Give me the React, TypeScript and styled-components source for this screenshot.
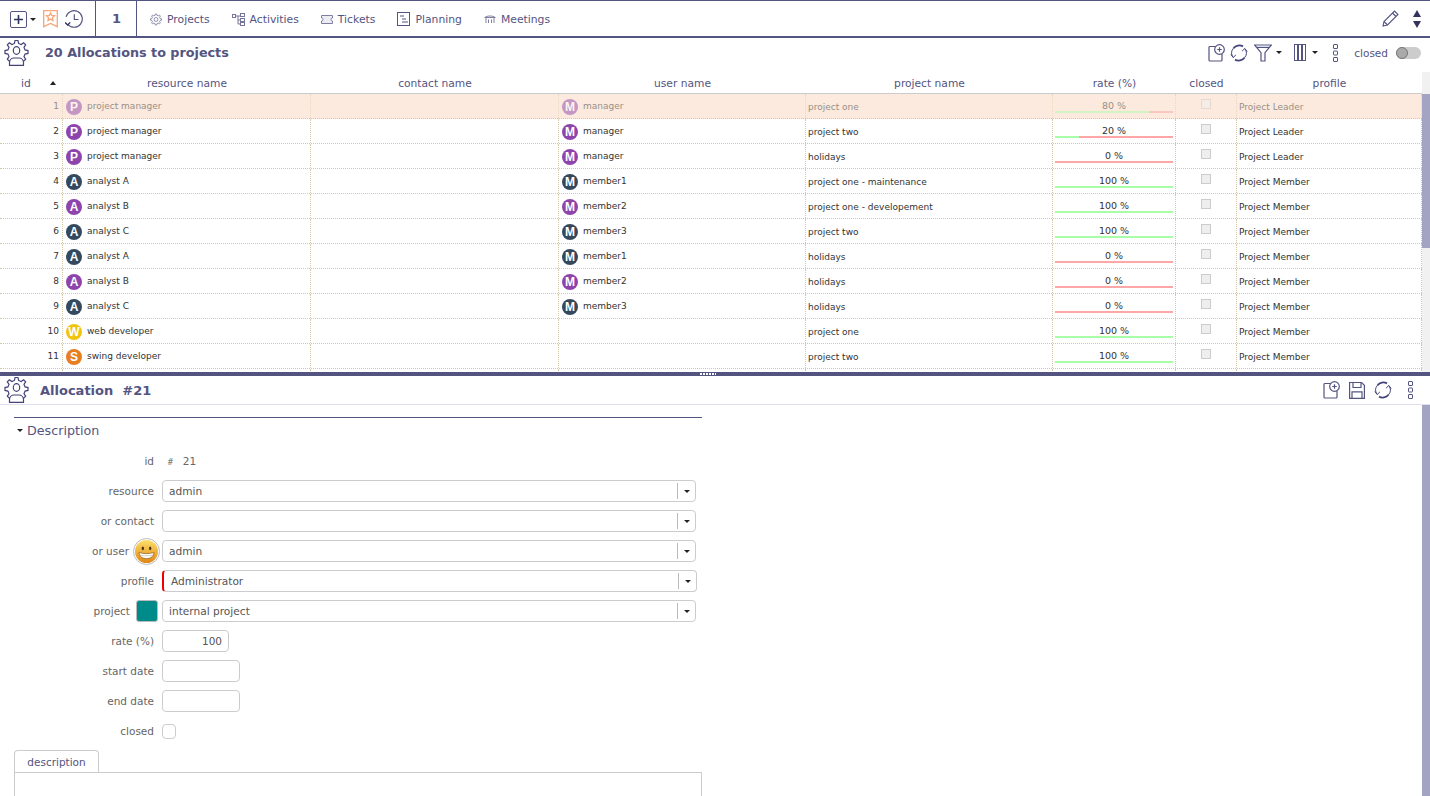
import styled, {createGlobalStyle} from 'styled-components';
import {ReactNode} from "react";

const NAVY = '#545481';
const GRID = '63px 248px 248px 247px 247px 123px 61px 1fr';
const DOT = '#d6c8a4';

type Allocation = {
    id: number,
    letter: string,
    tint: string,
    resource: string,
    user?: string,
    userTint?: string,
    userLetter?: string,
    project: string,
    rate: number,
    profile: string,
}

const PURPLE = '#8e44ad';
const DARK = '#34495e';

const rows: Allocation[] = [
    {id: 1, letter: 'P', tint: PURPLE, resource: 'project manager', user: 'manager', userLetter: 'M', userTint: PURPLE, project: 'project one', rate: 80, profile: 'Project Leader'},
    {id: 2, letter: 'P', tint: PURPLE, resource: 'project manager', user: 'manager', userLetter: 'M', userTint: PURPLE, project: 'project two', rate: 20, profile: 'Project Leader'},
    {id: 3, letter: 'P', tint: PURPLE, resource: 'project manager', user: 'manager', userLetter: 'M', userTint: PURPLE, project: 'holidays', rate: 0, profile: 'Project Leader'},
    {id: 4, letter: 'A', tint: DARK, resource: 'analyst A', user: 'member1', userLetter: 'M', userTint: DARK, project: 'project one - maintenance', rate: 100, profile: 'Project Member'},
    {id: 5, letter: 'A', tint: PURPLE, resource: 'analyst B', user: 'member2', userLetter: 'M', userTint: PURPLE, project: 'project one - developement', rate: 100, profile: 'Project Member'},
    {id: 6, letter: 'A', tint: DARK, resource: 'analyst C', user: 'member3', userLetter: 'M', userTint: DARK, project: 'project two', rate: 100, profile: 'Project Member'},
    {id: 7, letter: 'A', tint: DARK, resource: 'analyst A', user: 'member1', userLetter: 'M', userTint: DARK, project: 'holidays', rate: 0, profile: 'Project Member'},
    {id: 8, letter: 'A', tint: PURPLE, resource: 'analyst B', user: 'member2', userLetter: 'M', userTint: PURPLE, project: 'holidays', rate: 0, profile: 'Project Member'},
    {id: 9, letter: 'A', tint: DARK, resource: 'analyst C', user: 'member3', userLetter: 'M', userTint: DARK, project: 'holidays', rate: 0, profile: 'Project Member'},
    {id: 10, letter: 'W', tint: '#f1c40f', resource: 'web developer', project: 'project one', rate: 100, profile: 'Project Member'},
    {id: 11, letter: 'S', tint: '#e67e22', resource: 'swing developer', project: 'project two', rate: 100, profile: 'Project Member'},
];

const gearPath = (() => {
    const points: string[] = [];
    const teeth = 8;
    for (let i = 0; i < teeth; i++) {
        const a = (i / teeth) * Math.PI * 2;
        const step = Math.PI * 2 / teeth;
        [[a - step * 0.3, 8.8], [a - step * 0.16, 11.6], [a + step * 0.16, 11.6], [a + step * 0.3, 8.8]].forEach(([t, r]) => {
            points.push(`${(12.5 + Math.sin(t) * r).toFixed(2)} ${(12 - Math.cos(t) * r).toFixed(2)}`);
        });
    }
    return 'M' + points.join('L') + 'Z';
})();

function GearPerson() {
    return (
        <svg width="25" height="26" viewBox="0 0 25 26" fill="none" stroke="#43437a" strokeWidth="1.2">
            <path d={gearPath}/>
            <ellipse cx="12.500" cy="10.500" rx="3.200" ry="3.800" fill="#fff"/>
            <path d="M5.500 25.400v-2.900a4.500 4.500 0 0 1 4.500-4.500h5a4.500 4.500 0 0 1 4.500 4.500v2.900z" fill="#fff"/>
        </svg>
    );
}

function AddDoc() {
    return (
        <svg width="17" height="18" viewBox="0 0 17 18" fill="none" stroke={NAVY} strokeWidth="1.2">
            <path d="M9 2.500H2a1 1 0 0 0-1 1V16a1 1 0 0 0 1 1h11a1 1 0 0 0 1-1V10"/>
            <circle cx="11.500" cy="5.500" r="4.800" fill="#fff"/>
            <path d="M11.500 3.200v4.600M9.200 5.500h4.600"/>
        </svg>
    );
}

function Refresh() {
    return (
        <svg width="18" height="18" viewBox="0 0 18 18" fill="none" stroke="#43437a">
            <path d="M3.500 4.200A7.400 7.400 0 0 1 13 2.400" strokeWidth="1.800"/>
            <path d="M14.500 13.800A7.400 7.400 0 0 1 5 15.600" strokeWidth="1.800"/>
            <path d="M3.500 4.200A7.400 7.400 0 0 0 3.200 13.400" strokeWidth="1"/>
            <path d="M14.500 13.800A7.400 7.400 0 0 0 14.800 4.600" strokeWidth="1"/>
            <path d="M.8 10.500l2.400 3 2.700-2.600M17.200 7.500l-2.400-3-2.700 2.600" strokeWidth="1"/>
        </svg>
    );
}

function Funnel() {
    return (
        <svg width="18" height="18" viewBox="0 0 18 18" fill="none" stroke={NAVY} strokeWidth="1.200">
            <path d="M.6 1h16.800L11 8.600V17H7V8.600z"/>
            <path d="M3 3.400h12"/>
        </svg>
    );
}

function Columns() {
    return (
        <svg width="12" height="17" viewBox="0 0 12 17" fill="none" stroke={NAVY} strokeWidth="1">
            <rect x=".5" y=".5" width="3" height="16"/>
            <rect x="4.500" y=".5" width="3" height="16"/>
            <rect x="8.500" y=".5" width="3" height="16"/>
        </svg>
    );
}

function Dots() {
    return (
        <svg width="5" height="18" viewBox="0 0 5 18" fill="none" stroke={NAVY} strokeWidth="1">
            <rect x=".5" y=".5" width="4" height="4" rx=".5"/>
            <rect x=".5" y="7" width="4" height="4" rx=".5"/>
            <rect x=".5" y="13.500" width="4" height="4" rx=".5"/>
        </svg>
    );
}

function Save() {
    return (
        <svg width="16" height="18" viewBox="0 0 16 18" fill="none" stroke={NAVY} strokeWidth="1.200">
            <path d="M.6 1.500h12l2.800 2.800v13H.6z"/>
            <path d="M4 1.500v5h8v-5M3 17.300v-6.500h10v6.500"/>
        </svg>
    );
}

function AddSquare() {
    return (
        <svg width="17" height="17" viewBox="0 0 17 17" fill="none">
            <rect x=".5" y=".5" width="16" height="16" rx="1.500" stroke={NAVY}/>
            <path d="M8.500 4v9M4 8.500h9" stroke="#33335f" strokeWidth="1.600"/>
        </svg>
    );
}

function Bookmark() {
    return (
        <svg width="15" height="18" viewBox="0 0 15 18" fill="none" stroke="#f5a778" strokeWidth="1.300">
            <path d="M.7.7h13.600v16L7.500 13.500.7 16.700z"/>
            <path d="M7.500 2.900l1.200 2.600 2.800.3-2.100 1.900.6 2.800-2.500-1.400-2.500 1.400.6-2.800-2.100-1.900 2.800-.3z"/>
        </svg>
    );
}

function History() {
    return (
        <svg width="18" height="18" viewBox="0 0 17 17" fill="none" stroke={NAVY} strokeWidth="1.100">
            <path d="M2.600 13.500A7.800 7.800 0 1 0 1 6.500"/>
            <path d="M0 11.800l2.600 2.400 2.300-2.500" stroke="#33335f" strokeWidth="1.300"/>
            <path d="M8.800 4v5h4"/>
        </svg>
    );
}

function Pencil() {
    return (
        <svg width="17" height="17" viewBox="0 0 17 17" fill="none" stroke={NAVY} strokeWidth="1.100">
            <path d="M1 16l1-4.500L12.500 1l3.500 3.500L5.500 15z"/>
            <path d="M2 11.500L5.500 15M10.500 3l3.500 3.500"/>
        </svg>
    );
}

function ProjectsIcon() {
    return (
        <svg width="12" height="13" viewBox="0 0 25 26" fill="none" stroke={NAVY} strokeWidth="1.800" opacity=".75">
            <path d={gearPath} transform="translate(0 1)"/>
            <circle cx="12.500" cy="13" r="4"/>
        </svg>
    );
}

function ActivitiesIcon() {
    return (
        <svg width="13" height="13" viewBox="0 0 13 13" fill="none" stroke={NAVY} strokeWidth="1" opacity=".8">
            <rect x=".5" y="1.500" width="3" height="3"/>
            <rect x="8.500" y=".5" width="4" height="3"/>
            <rect x="8.500" y="5.500" width="4" height="3"/>
            <rect x="8.500" y="9.500" width="4" height="3"/>
            <path d="M3.500 3h5M6 3v8h2.500M6 7h2.500"/>
        </svg>
    );
}

function TicketIcon() {
    return (
        <svg width="12" height="9" viewBox="0 0 12 9" fill="#e6e6ef" stroke={NAVY} strokeWidth="1" opacity=".75">
            <path d="M.5.5h11v2.500a1.500 1.500 0 0 0 0 3v2.500H.5V6a1.500 1.500 0 0 0 0-3z"/>
        </svg>
    );
}

function PlanningIcon() {
    return (
        <svg width="13" height="14" viewBox="0 0 13 14" fill="none" stroke={NAVY} strokeWidth="1">
            <rect x=".5" y=".5" width="12" height="13"/>
            <path d="M3 4h4M5 7h4M5 10h6"/>
        </svg>
    );
}

function MeetingIcon() {
    return (
        <svg width="12" height="8" viewBox="0 0 12 8" fill="none" stroke={NAVY} strokeWidth="1" opacity=".75">
            <path d="M1 2.500C3 .5 9 .5 11 2.500M.5 2.500h11M2 2.500V8M10 2.500V8M4.500 4.500V8M7.500 4.500V8"/>
        </svg>
    );
}

function Smiley() {
    return (
        <svg width="23" height="23" viewBox="0 0 22 22">
            <defs>
                <linearGradient id="face" x1="0" y1="0" x2="0" y2="1">
                    <stop offset="0" stopColor="#fde06a"/>
                    <stop offset="1" stopColor="#e08512"/>
                </linearGradient>
            </defs>
            <circle cx="11" cy="11" r="11" fill="url(#face)"/>
            <ellipse cx="7.500" cy="8" rx="1.100" ry="1.800" fill="#4a3410"/>
            <ellipse cx="14.500" cy="8" rx="1.100" ry="1.800" fill="#4a3410"/>
            <path d="M3.800 12c4.500 1.400 9.900 1.400 14.400 0-.4 4-3.600 5.800-7.200 5.800s-6.800-1.800-7.200-5.800z" fill="#fff" stroke="#7a5510" strokeWidth=".6"/>
            <path d="M4.500 14.500c4 .8 9 .8 13 0" fill="none" stroke="#b9a27a" strokeWidth=".5"/>
        </svg>
    );
}

function Select({value, wide, required}: Readonly<{value?: string, wide?: boolean, required?: boolean}>) {
    return (
        <SelectBox $wide={wide} $required={required}>
            <SelectValue>{value}</SelectValue>
            <SelectArrow><Caret/></SelectArrow>
        </SelectBox>
    );
}

function FormRow({label, addon, children}: Readonly<{label: string, addon?: ReactNode, children: ReactNode}>) {
    return (
        <Row>
            <LabelCell $tight={!!addon}>
                <span>{label}</span>
                {addon}
            </LabelCell>
            {children}
        </Row>
    );
}

export default function App() {
    return (
        <Page>
            <GlobalStyle/>
            <TopBar>
                <Cluster>
                    <AddSquare/>
                    <AddCaret/>
                    <BookmarkSlot><Bookmark/></BookmarkSlot>
                    <History/>
                </Cluster>
                <ProjectCount>1</ProjectCount>
                <NavList>
                    <NavItem><ProjectsIcon/>Projects</NavItem>
                    <NavItem><ActivitiesIcon/>Activities</NavItem>
                    <NavItem><TicketIcon/>Tickets</NavItem>
                    <NavItem><PlanningIcon/>Planning</NavItem>
                    <NavItem><MeetingIcon/>Meetings</NavItem>
                </NavList>
                <TopRight>
                    <Pencil/>
                    <UpDown>
                        <ArrowUp/>
                        <ArrowDown/>
                    </UpDown>
                </TopRight>
            </TopBar>

            <ListPanel>
                <ListHead>
                    <HeadIcon><GearPerson/></HeadIcon>
                    <ListTitle>20 Allocations to projects</ListTitle>
                    <ListTools>
                        <AddDoc/>
                        <Refresh/>
                        <WithCaret $gap={4}><Funnel/><Caret/></WithCaret>
                        <WithCaret $gap={6}><Columns/><Caret/></WithCaret>
                        <ListDots><Dots/></ListDots>
                        <ClosedLabel>closed</ClosedLabel>
                        <Toggle><Knob/></Toggle>
                    </ListTools>
                </ListHead>
                <GridWrap>
                    <GridBody>
                        <HeaderRow>
                            <HeaderId>id<SortUp/></HeaderId>
                            <HeaderCell>resource name</HeaderCell>
                            <HeaderCell>contact name</HeaderCell>
                            <HeaderCell>user name</HeaderCell>
                            <HeaderCell>project name</HeaderCell>
                            <HeaderCell>rate (%)</HeaderCell>
                            <HeaderCell>closed</HeaderCell>
                            <HeaderCell>profile</HeaderCell>
                        </HeaderRow>
                        {rows.map((r) => (
                            <DataRow key={r.id} $selected={r.id === 1}>
                                <IdCell>{r.id}</IdCell>
                                <Cell>
                                    <Avatar $tint={r.tint}>{r.letter}</Avatar>
                                    <CellText>{r.resource}</CellText>
                                </Cell>
                                <Cell/>
                                <Cell>
                                    {r.user && <Avatar $tint={r.userTint ?? DARK}>{r.userLetter}</Avatar>}
                                    {r.user && <CellText>{r.user}</CellText>}
                                </Cell>
                                <PlainCell>{r.project}</PlainCell>
                                <RateCell>
                                    <RateText>{r.rate} %</RateText>
                                    <RateBar>
                                        <RateFill style={{width: `${r.rate}%`}}/>
                                    </RateBar>
                                </RateCell>
                                <CheckCell><GridCheck/></CheckCell>
                                <PlainCell>{r.profile}</PlainCell>
                            </DataRow>
                        ))}
                        <DataRow $selected={false}>
                            <IdCell/><Cell/><Cell/><Cell/><PlainCell/><RateCell/><CheckCell/><PlainCell/>
                        </DataRow>
                    </GridBody>
                    <ScrollTrack>
                        <ListThumb/>
                    </ScrollTrack>
                </GridWrap>
            </ListPanel>

            <Splitter><Grip/></Splitter>

            <DetailPanel>
                <DetailHead>
                    <HeadIcon><GearPerson/></HeadIcon>
                    <DetailTitle>Allocation&nbsp; #21</DetailTitle>
                    <DetailTools>
                        <AddDoc/>
                        <Save/>
                        <Refresh/>
                        <DetailDots><Dots/></DetailDots>
                    </DetailTools>
                </DetailHead>
                <DetailBody>
                    <FormColumn>
                        <SectionTitle><Caret/>Description</SectionTitle>
                        <Form>
                            <FormRow label="id"><IdValue><Hash>#</Hash>21</IdValue></FormRow>
                            <FormRow label="resource"><Select value="admin"/></FormRow>
                            <FormRow label="or contact"><Select/></FormRow>
                            <FormRow label="or user" addon={<UserThumb><Smiley/></UserThumb>}><Select value="admin"/></FormRow>
                            <FormRow label="profile"><Select value="Administrator" wide required/></FormRow>
                            <FormRow label="project" addon={<Swatch/>}><Select value="internal project"/></FormRow>
                            <FormRow label="rate (%)"><RateInput>100</RateInput></FormRow>
                            <FormRow label="start date"><DateInput/></FormRow>
                            <FormRow label="end date"><DateInput/></FormRow>
                            <FormRow label="closed"><FormCheck/></FormRow>
                        </Form>
                        <TabStrip><Tab>description</Tab></TabStrip>
                        <TabBox/>
                    </FormColumn>
                    <ScrollTrack>
                        <DetailThumb/>
                    </ScrollTrack>
                </DetailBody>
            </DetailPanel>
        </Page>
    );
}

const GlobalStyle = createGlobalStyle`
    html, body {
        margin: 0;
        height: 100%;
        overflow: hidden;
        background: #fff;
    }
    * {
        box-sizing: border-box;
    }
`;
const Page = styled.div`
    width: 1430px;
    height: 796px;
    display: flex;
    flex-direction: column;
    overflow: hidden;
    font-family: "DejaVu Sans", sans-serif;
    color: ${NAVY};
`;
const TopBar = styled.header`
    height: 38px;
    flex: none;
    display: flex;
    align-items: stretch;
    border-top: 1px solid ${NAVY};
    border-bottom: 2px solid ${NAVY};
`;
const Cluster = styled.div`
    width: 96px;
    display: flex;
    align-items: center;
    padding: 1px 0 0 10px;
    border-right: 1px solid ${NAVY};
`;
const Caret = styled.span`
    display: inline-block;
    width: 0;
    height: 0;
    border-left: 3.5px solid transparent;
    border-right: 3.5px solid transparent;
    border-top: 3.5px solid #222;
`;
const AddCaret = styled(Caret)`
    margin-left: 3px;
`;
const BookmarkSlot = styled.div`
    display: flex;
    margin: 0 7px;
`;
const ProjectCount = styled.div`
    width: 41px;
    display: flex;
    align-items: center;
    padding-left: 16px;
    border-right: 1px solid ${NAVY};
    font-size: 13px;
    font-weight: 700;
`;
const NavList = styled.nav`
    display: flex;
    align-items: center;
    gap: 22px;
    padding: 1px 0 0 13px;
`;
const NavItem = styled.div`
    display: flex;
    align-items: center;
    gap: 5px;
    font-size: 10.8px;
`;
const TopRight = styled.div`
    margin-left: auto;
    display: flex;
    align-items: center;
    gap: 14px;
    padding-right: 9px;
`;
const UpDown = styled.div`
    display: flex;
    flex-direction: column;
    gap: 4px;
`;
const ArrowUp = styled.span`
    width: 0;
    height: 0;
    border-left: 4px solid transparent;
    border-right: 4px solid transparent;
    border-bottom: 7px solid #33335f;
`;
const ArrowDown = styled.span`
    width: 0;
    height: 0;
    border-left: 4px solid transparent;
    border-right: 4px solid transparent;
    border-top: 7px solid #33335f;
`;
const ListPanel = styled.section`
    height: 334px;
    flex: none;
    display: flex;
    flex-direction: column;
    overflow: hidden;
`;
const ListHead = styled.div`
    height: 34px;
    flex: none;
    display: flex;
    align-items: center;
    padding: 0 0 5px 4px;
`;
const HeadIcon = styled.div`
    display: flex;
    width: 26px;
`;
const ListTitle = styled.h1`
    margin: 0 0 0 15px;
    font-size: 12.75px;
    font-weight: 700;
    color: ${NAVY};
`;
const ListTools = styled.div`
    margin-left: auto;
    display: flex;
    align-items: center;
    gap: 5px;
    padding-right: 9px;
`;
const WithCaret = styled.div<{$gap: number}>`
    display: flex;
    align-items: center;
    gap: ${(p) => p.$gap}px;
    margin-left: 1px;
    margin-right: 6px;
`;
const ListDots = styled.div`
    display: flex;
    margin: 0 11px 0 4px;
`;
const DetailDots = styled.div`
    display: flex;
    margin-left: 7px;
`;
const ClosedLabel = styled.span`
    font-size: 10.5px;
    margin-right: 3px;
`;
const Toggle = styled.div`
    width: 25px;
    height: 12px;
    border-radius: 6px;
    background: #ccc;
    display: flex;
    align-items: center;
`;
const Knob = styled.div`
    width: 12px;
    height: 12px;
    border-radius: 50%;
    border: 1px solid #777;
    background: #aaa;
`;
const GridWrap = styled.div`
    flex: 1;
    min-height: 0;
    display: flex;
`;
const GridBody = styled.div`
    flex: 1;
    min-width: 0;
    overflow: hidden;
`;
const HeaderRow = styled.div`
    height: 22px;
    padding-top: 1px;
    display: grid;
    grid-template-columns: ${GRID};
    border-bottom: 1px solid #ccc;
    align-items: center;
`;
const HeaderCell = styled.div`
    text-align: center;
    font-size: 10.7px;
`;
const HeaderId = styled(HeaderCell)`
    display: flex;
    align-items: center;
    padding-left: 21px;
    gap: 19px;
`;
const SortUp = styled.span`
    width: 0;
    height: 0;
    border-left: 3px solid transparent;
    border-right: 3px solid transparent;
    border-bottom: 4px solid #222;
`;
const DataRow = styled.div<{$selected: boolean}>`
    height: 25px;
    display: grid;
    grid-template-columns: ${GRID};
    border-bottom: 1px dotted ${DOT};
    font-size: 9px;
    color: #333;
    background: ${(p) => (p.$selected ? '#fbeadd' : '#fff')};
    & > * {
        opacity: ${(p) => (p.$selected ? 0.5 : 1)};
    }
`;
const Cell = styled.div`
    display: flex;
    align-items: center;
    padding: 2px 0 0 3px;
    border-right: 1px dotted ${DOT};
`;
const IdCell = styled(Cell)`
    justify-content: flex-end;
    padding: 0 3px 0 0;
`;
const CellText = styled.span`
    margin-left: 5px;
    margin-top: -3px;
`;
const PlainCell = styled(Cell)`
    padding: 1px 0 0 2px;
`;
const Avatar = styled.span<{$tint: string}>`
    width: 16px;
    height: 16px;
    border-radius: 50%;
    background: ${(p) => p.$tint};
    color: #fff;
    font-family: "Liberation Sans", sans-serif;
    font-size: 12px;
    font-weight: 700;
    display: flex;
    align-items: center;
    justify-content: center;
`;
const RateCell = styled.div`
    display: flex;
    flex-direction: column;
    align-items: stretch;
    padding: 6px 2px 0 2px;
    border-right: 1px dotted ${DOT};
`;
const RateText = styled.div`
    text-align: center;
    font-size: 9.5px;
    line-height: 11px;
`;
const RateBar = styled.div`
    height: 2px;
    background: #ffa6a6;
`;
const RateFill = styled.div`
    height: 100%;
    background: #a8ffa8;
`;
const CheckCell = styled.div`
    display: flex;
    justify-content: center;
    padding-top: 5px;
    border-right: 1px dotted ${DOT};
`;
const GridCheck = styled.div`
    width: 10px;
    height: 10px;
    background: #eee;
    border: 1px solid #ccc;
`;
const ScrollTrack = styled.div`
    width: 8px;
    flex: none;
    background: #f1f1f1;
    display: flex;
    flex-direction: column;
`;
const ListThumb = styled.div`
    margin-top: 22px;
    height: 154px;
    background: #a3a3c4;
`;
const DetailThumb = styled.div`
    flex: 1;
    background: #a3a3c4;
`;
const Splitter = styled.div`
    height: 4px;
    flex: none;
    background: ${NAVY};
    display: flex;
    justify-content: center;
    align-items: center;
    padding-right: 14px;
`;
const Grip = styled.div`
    width: 16px;
    height: 2px;
    background: repeating-linear-gradient(90deg, #fff 0 2px, ${NAVY} 2px 3px);
`;
const DetailPanel = styled.section`
    flex: 1;
    min-height: 0;
    display: flex;
    flex-direction: column;
`;
const DetailHead = styled.div`
    height: 29px;
    flex: none;
    display: flex;
    align-items: center;
    padding-left: 4px;
    border-bottom: 1px solid #e0e0ee;
`;
const DetailTitle = styled.h2`
    margin: 0 0 0 10px;
    font-size: 13px;
    font-weight: 700;
    color: ${NAVY};
`;
const DetailTools = styled.div`
    margin-left: auto;
    display: flex;
    align-items: center;
    gap: 9px;
    padding-right: 17px;
`;
const DetailBody = styled.div`
    flex: 1;
    min-height: 0;
    display: flex;
    justify-content: space-between;
`;
const FormColumn = styled.div`
    width: 688px;
    margin: 12px 0 0 14px;
    border-top: 1px solid ${NAVY};
`;
const SectionTitle = styled.div`
    display: flex;
    align-items: center;
    height: 25px;
    font-size: 12.7px;
    padding-left: 3px;
    gap: 4px;
`;
const Form = styled.div`
    display: flex;
    flex-direction: column;
    margin: 3px 0 0 -14px;
    color: #666;
`;
const Row = styled.div`
    height: 30px;
    display: flex;
    align-items: center;
`;
const LabelCell = styled.div<{$tight: boolean}>`
    width: 162px;
    flex: none;
    display: flex;
    justify-content: flex-end;
    align-items: center;
    gap: 4px;
    padding-right: ${(p) => (p.$tight ? '2px' : '8px')};
    font-size: 10.5px;
`;
const IdValue = styled.div`
    font-size: 10.5px;
`;
const Hash = styled.span`
    font-size: 8px;
    margin: 0 9px 0 5px;
`;
const UserThumb = styled.div`
    width: 27px;
    height: 27px;
    border-radius: 50%;
    border: 1px solid #bbb;
    display: flex;
    align-items: center;
    justify-content: center;
    background: #fff;
`;
const Swatch = styled.div`
    width: 22px;
    height: 22px;
    border-radius: 3px;
    background: #008b8b;
    border: 1px solid #bbb;
    margin: 0 2px;
`;
const SelectBox = styled.div<{$wide?: boolean, $required?: boolean}>`
    width: ${(p) => (p.$wide ? '535px' : '534px')};
    height: 22px;
    display: flex;
    align-items: center;
    border: 1px solid #ccc;
    border-left: ${(p) => (p.$required ? '2px solid #e00' : '1px solid #ccc')};
    border-radius: 4px;
    padding-left: ${(p) => (p.$required ? '7px' : '6px')};
`;
const SelectValue = styled.div`
    flex: 1;
    font-size: 10.6px;
    color: #555;
`;
const SelectArrow = styled.div`
    width: 18px;
    height: 16px;
    display: flex;
    align-items: center;
    justify-content: center;
    border-left: 1px solid #bbb;
`;
const RateInput = styled.div`
    width: 67px;
    height: 22px;
    border: 1px solid #ccc;
    border-radius: 4px;
    text-align: right;
    padding-right: 6px;
    font-size: 10.5px;
    line-height: 20px;
    color: #555;
`;
const DateInput = styled.div`
    width: 78px;
    height: 22px;
    border: 1px solid #ccc;
    border-radius: 4px;
`;
const FormCheck = styled.div`
    width: 14px;
    height: 15px;
    border: 1px solid #ccc;
    border-radius: 4px;
`;
const TabStrip = styled.div`
    display: flex;
    margin-top: 4px;
`;
const Tab = styled.div`
    width: 85px;
    height: 22px;
    border: 1px solid #ccc;
    border-bottom: none;
    border-radius: 4px 4px 0 0;
    display: flex;
    align-items: center;
    justify-content: center;
    font-size: 10.5px;
`;
const TabBox = styled.div`
    height: 60px;
    border: 1px solid #ccc;
`;
